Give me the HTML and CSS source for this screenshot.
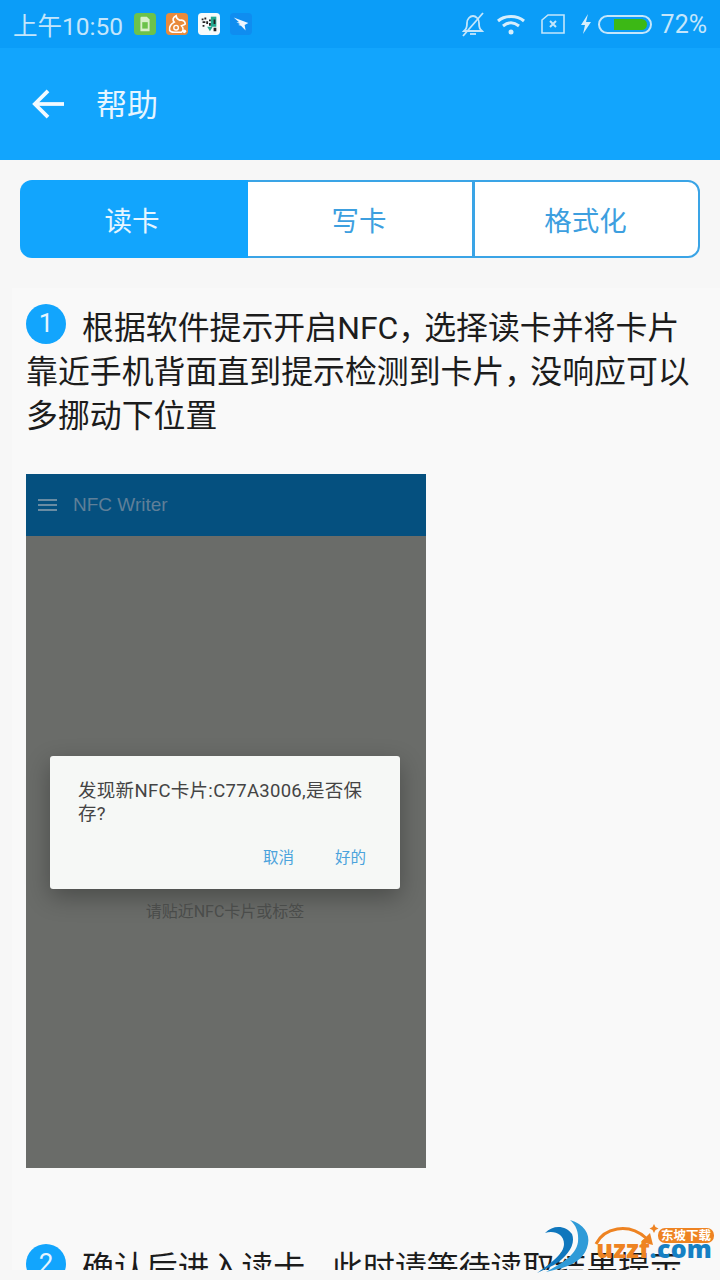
FILE: index.html
```html
<!DOCTYPE html>
<html lang="zh-CN">
<head>
    <meta charset="UTF-8">
    <meta name="viewport" content="width=device-width, initial-scale=1.0">
    <title>帮助</title>
    <link rel="stylesheet" href="styles.css">
</head>
<body>
    <div class="phone">
        <div class="status-bar">
            <div class="status-left">
                <span class="clock">上午10:50</span>
                <svg class="app-icon" viewBox="0 0 24 24">
                    <rect width="24" height="24" rx="4" fill="#6cc24a"/>
                    <path d="M8 4h6l3 3v13H7V5z" fill="#d8f0c8"/>
                    <rect x="9" y="10" width="6" height="7" fill="#6cc24a"/>
                </svg>
                <svg class="app-icon" viewBox="0 0 24 24">
                    <rect width="24" height="24" rx="4" fill="#e98a3a"/>
                    <path d="M11 3C7 5 7 8 9 10c-3 2-6 4-5 9 1 2 3 2 5 2h8c2-2 2-5 0-7 2-1 3-1 4-2 0-3-3-5-6-4-2-1-4-2-4-5z" fill="none" stroke="#fff" stroke-width="1.8"/>
                    <circle cx="11" cy="16" r="2.5" fill="none" stroke="#fff" stroke-width="1.5"/>
                    <circle cx="20" cy="20" r="2" fill="#fff"/>
                </svg>
                <svg class="app-icon" viewBox="0 0 24 24">
                    <rect width="24" height="24" rx="4" fill="#f6fbfb"/>
                    <rect x="14" y="4" width="6" height="11" fill="#23a88e"/>
                    <path d="M10 15l6 0-3 5z" fill="#23a88e"/>
                    <path d="M4 6h2v2H4zM7 5h2v2H7zM5 9h3v2H5zM9 9h2v3H9zM5 13h2v2H5zM12 7h2v2h-2zM12 11h2v3h-2zM17 7h2v5h-2zM17 16h3v4h-3z" fill="#222"/>
                </svg>
                <svg class="app-icon" viewBox="0 0 24 24">
                    <rect width="24" height="24" rx="4" fill="#0f8df0"/>
                    <path d="M4 5l16 6-4 2 1 6-5-5-3-1 2-1-4-2 3 0z" fill="#eef7ff"/>
                </svg>
            </div>
            <div class="status-right">
                <svg class="sys-bell" viewBox="0 0 26 26" fill="none" stroke="#c4e6fb" stroke-width="1.8">
                    <path d="M4 20c2-2 3-3 3-8 0-4 3-7 6-7s6 3 6 7c0 5 1 6 3 8z"/>
                    <path d="M10 23h6"/>
                    <path d="M3 25L23 2"/>
                </svg>
                <svg class="sys-wifi" viewBox="0 0 30 24" fill="none" stroke="#d6eefc" stroke-width="3">
                    <path d="M2 9c7-6 19-6 26 0"/>
                    <path d="M7 14c5-4 11-4 16 0"/>
                    <circle cx="15" cy="20" r="2.5" fill="#d6eefc" stroke="none"/>
                </svg>
                <svg class="sys-sim" viewBox="0 0 26 22" fill="none" stroke="#c4e6fb" stroke-width="1.6">
                    <path d="M8 2h16v18H2V7z"/>
                    <path d="M10 8l6 6M16 8l-6 6" stroke-width="2"/>
                </svg>
                <svg class="sys-bolt" viewBox="0 0 12 20">
                    <path d="M8 0L1 11h4l-2 9 8-12H6z" fill="#d6eefc"/>
                </svg>
                <div class="battery"><div class="battery-fill"></div></div>
                <span class="battery-pct">72%</span>
            </div>
        </div>

        <header class="app-bar">
            <svg class="back-icon" viewBox="0 0 36 34" fill="none" stroke="#f2faff" stroke-width="4">
                <path d="M35 17H5"/>
                <path d="M18 3L4 17l14 14"/>
            </svg>
            <span class="app-title">帮助</span>
        </header>

        <main class="page">
            <div class="tabs">
                <div class="tab tab-active">读卡</div>
                <div class="tab">写卡</div>
                <div class="tab">格式化</div>
            </div>

            <div class="help-panel">
                <p class="step">
                    <span class="step-num">1</span>根据软件提示开启NFC<span class="comma">，</span>选择读卡并将卡片靠近手机背面直到提示检测到卡片<span class="comma">，</span>没响应可以多挪动下位置
                </p>

                <div class="shot">
                    <div class="shot-bar">
                        <div class="shot-menu"><span></span><span></span><span></span></div>
                        <span>NFC Writer</span>
                    </div>
                    <div class="shot-body">
                        <div class="shot-dialog">
                            <p class="shot-msg">发现新NFC卡片:C77A3006,是否保存?</p>
                            <div class="shot-actions">
                                <span>取消</span>
                                <span>好的</span>
                            </div>
                        </div>
                        <p class="shot-hint">请贴近NFC卡片或标签</p>
                    </div>
                </div>

                <p class="step step-second">
                    <span class="step-num">2</span>确认后进入读卡<span class="comma">，</span>此时请等待读取结果提示
                </p>
            </div>
        </main>

        <div class="watermark">
            <svg class="wm-mark" viewBox="0 0 56 56">
                <path d="M34 2C48 6 54 16 52 26 50 38 40 46 26 50L10 54C24 46 40 38 42 24 43 14 40 7 34 2z" fill="#2f9bd8"/>
                <path d="M9 15C18 6 30 8 36 16 40 26 32 38 18 47L1 55C14 46 28 36 28 26 28 16 18 12 9 15z" fill="#1077bd"/>
            </svg>
            <svg class="wm-arrow" viewBox="0 0 70 26" fill="none">
                <path d="M2 22C10 6 34 0 52 16" stroke="#ee8322" stroke-width="3"/>
                <path d="M47 20l12 3-3-12z" fill="#ee8322"/>
                <path d="M60 2l1.500 3 3 1.500-3 1.500-1.500 3-1.500-3-3-1.500 3-1.500z" fill="#ee8322"/>
            </svg>
            <div class="wm-text">
                <span class="wm-tag">东坡下载</span>
                <span class="wm-site"><span class="wm-orange">uzzf</span>.com</span>
            </div>
        </div>
    </div>
</body>
</html>
```

FILE: styles.css
```css
html, body {
    margin: 0;
    padding: 0;
}
body {
    font-family: "Roboto", "Noto Sans CJK SC", sans-serif;
    background-color: #f7f7f7;
}
.phone {
    position: relative;
    width: 720px;
    height: 1280px;
    overflow: hidden;
    display: flex;
    flex-direction: column;
}

/* status bar */
.status-bar {
    height: 48px;
    flex: none;
    background-color: #0b9df8;
    display: flex;
    justify-content: space-between;
    align-items: center;
    padding: 0 13px 0 13px;
    box-sizing: border-box;
    color: #c4e6fb;
}
.status-left, .status-right {
    display: flex;
    align-items: center;
}
.clock {
    font-size: 24.5px;
    margin-right: 11px;
}
.app-icon {
    width: 22px;
    height: 22px;
    margin-right: 10px;
}
.sys-bell {
    width: 26px;
    height: 26px;
    margin-right: 10px;
}
.sys-wifi {
    width: 30px;
    height: 24px;
    margin-right: 14px;
}
.sys-sim {
    width: 26px;
    height: 22px;
    margin-right: 14px;
}
.sys-bolt {
    width: 12px;
    height: 20px;
    margin-right: 6px;
}
.battery {
    width: 54px;
    height: 19px;
    border: 2px solid #c4e6fb;
    border-radius: 10px;
    box-sizing: border-box;
    padding: 2px 3px 2px 14px;
    margin-right: 9px;
}
.battery-fill {
    height: 100%;
    background-color: #3cb815;
    border-radius: 0 6px 6px 0;
}
.battery-pct {
    font-size: 25px;
}

/* app bar */
.app-bar {
    height: 112px;
    flex: none;
    background-color: #12a5fd;
    display: flex;
    align-items: center;
    padding: 0 0 0 31px;
    box-sizing: border-box;
}
.back-icon {
    width: 34px;
    height: 32px;
    margin-right: 31px;
}
.app-title {
    color: #e6f5ff;
    font-size: 31px;
    margin-bottom: 4px;
}

/* tabs */
.page {
    flex: 1;
    min-height: 0;
    display: flex;
    flex-direction: column;
    padding: 20px 0 10px 0;
    box-sizing: border-box;
}
.tabs {
    margin: 0 20px;
    height: 78px;
    flex: none;
    display: grid;
    grid-template-columns: 228px 224px 1fr;
}
.tab {
    display: flex;
    align-items: center;
    justify-content: center;
    font-size: 27.500px;
    color: #3d9fdf;
    background-color: #fff;
    border: 2px solid #3aa4e6;
    border-width: 2px 0;
    box-sizing: border-box;
    padding-right: 2px;
}
.tab:last-child {
    border-width: 2px 2px 2px 3px;
    border-radius: 0 12px 12px 0;
}
.tab-active {
    background-color: #12a5fd;
    border-color: #12a5fd;
    color: #e6f5ff;
    border-radius: 12px 0 0 12px;
    padding-right: 4px;
}

/* help text */
.help-panel {
    flex: 1;
    min-height: 0;
    overflow: hidden;
    margin: 30px 0 0 12px;
    padding: 0 14px;
    background-color: #f9f9f9;
}
.step {
    margin: 16px 0 0 0;
    font-size: 31.900px;
    line-height: 44px;
    color: #1c1c1c;
}
.comma {
    margin-right: -6px;
}
.step-num {
    display: inline-block;
    width: 40px;
    height: 40px;
    line-height: 38px;
    margin: 0 16px 0 0;
    border-radius: 50%;
    background-color: #12a5fd;
    color: #e6f5ff;
    text-align: center;
    font-size: 26px;
    vertical-align: 7px;
}
.step-second {
    margin-top: 76px;
    white-space: nowrap;
}

/* embedded screenshot */
.shot {
    width: 400px;
    height: 694px;
    margin-top: 36px;
    display: flex;
    flex-direction: column;
    background-color: #6a6c69;
}
.shot-bar {
    height: 62px;
    flex: none;
    background-color: #05507f;
    display: flex;
    align-items: center;
    color: #5f7f98;
    font-size: 19px;
    font-family: "Liberation Sans", sans-serif;
}
.shot-menu {
    width: 19px;
    margin: 0 16px 0 12px;
    display: flex;
    flex-direction: column;
    gap: 3px;
}
.shot-menu span {
    height: 2px;
    background-color: #6a8ca3;
}
.shot-body {
    flex: 1;
    padding: 220px 26px 0 24px;
    display: flex;
    flex-direction: column;
    align-items: stretch;
}
.shot-dialog {
    height: 133px;
    background-color: #f6f8f6;
    border-radius: 3px;
    box-shadow: 0 8px 24px rgba(0, 0, 0, 0.3);
    padding: 24px 28px 0 28px;
    box-sizing: border-box;
}
.shot-msg {
    margin: 0;
    font-size: 18.500px;
    line-height: 23px;
    letter-spacing: 0.3px;
    color: #444;
}
.shot-actions {
    display: flex;
    justify-content: flex-end;
    gap: 41px;
    margin-top: 19px;
    padding-right: 6px;
    font-size: 15.500px;
    color: #4ba3dc;
}
.shot-hint {
    margin: 9px 0 0 0;
    text-align: center;
    font-size: 16px;
    color: #4a4c4a;
}

/* site watermark over the corner */
.watermark {
    position: absolute;
    left: 536px;
    top: 1218px;
    width: 178px;
    height: 58px;
    display: flex;
}
.wm-mark {
    width: 56px;
    height: 56px;
}
.wm-arrow {
    position: absolute;
    left: 58px;
    top: 4px;
    width: 70px;
    height: 26px;
}
.wm-text {
    flex: 1;
    display: flex;
    flex-direction: column;
    align-items: flex-end;
    padding-top: 10px;
}
.wm-tag {
    background-color: #ee8322;
    color: #fff;
    font-size: 12.500px;
    line-height: 15px;
    font-weight: bold;
    padding: 0 3px;
    border-radius: 7px;
}
.wm-site {
    font-family: "Open Sans", sans-serif;
    font-size: 25px;
    line-height: 20px;
    font-weight: 800;
    letter-spacing: 0.2px;
    color: #1580c4;
    margin: -5px 2px 0 0;
}
.wm-orange {
    color: #ee8322;
}
```
